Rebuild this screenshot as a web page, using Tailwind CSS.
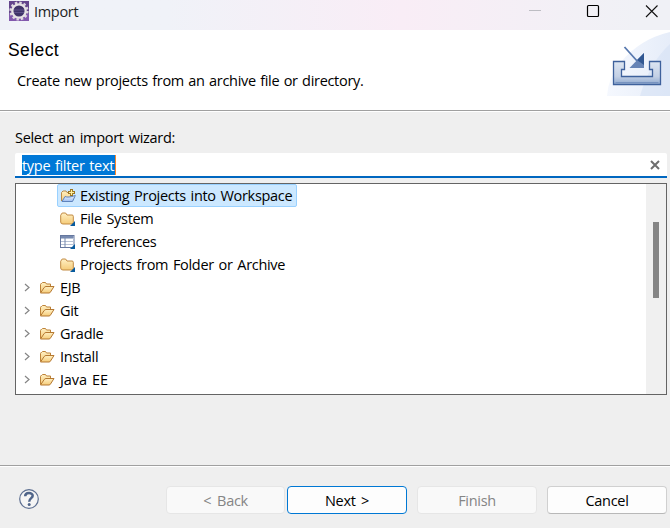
<!DOCTYPE html>
<html lang="en">
<head>
<meta charset="utf-8">
<title>Import</title>
<script src="https://cdn.jsdelivr.net/npm/@tailwindcss/browser@4"></script>
</head>
<body class="w-[670px] h-[528px] overflow-hidden bg-[#efefef] font-['Open_Sans','Noto_Sans',sans-serif] text-[14.5px] leading-[23px] tracking-[-0.3px] [word-spacing:1.2px] text-black whitespace-nowrap">
<svg class="absolute h-0 w-0">
  <defs>
    <linearGradient id="gold" x1="0" y1="0" x2="0" y2="1"><stop offset="0" stop-color="#fff0c4"/><stop offset="1" stop-color="#f5cb78"/></linearGradient>
    <linearGradient id="tray" x1="0" y1="0" x2="0" y2="1"><stop offset="0" stop-color="#dde6f2"/><stop offset=".65" stop-color="#c3d0e5"/><stop offset="1" stop-color="#8fa9cf"/></linearGradient>
    <linearGradient id="sweep" x1="0" y1="0" x2="1" y2="0"><stop offset="0" stop-color="#f5f8fe"/><stop offset="1" stop-color="#e6edf9"/></linearGradient>
    <linearGradient id="blue" x1="0" y1="0" x2="0" y2="1"><stop offset="0" stop-color="#f0f6ff"/><stop offset="1" stop-color="#9dbdf0"/></linearGradient>
    <symbol id="open" viewBox="0 0 16 14">
      <path d="M1.5 11.5V3.5Q1.5 2.5 2.5 2.5L3.5 1.5H6.5L7.5 3H11.5V5.5" fill="url(#gold)" stroke="#bd8238"/>
      <path d="M1.5 12 5.2 6.5Q6 5.5 7 5.5H15L11.5 11Q11 12 10 12Z" fill="url(#gold)" stroke="#b57831"/>
    </symbol>
    <symbol id="folder" viewBox="0 0 16 14">
      <path d="M.7 3.2 2.2 1H5.6L7 3H12Q13.3 3 13.3 4.3V10.5Q13.3 12 12 12H3Q.7 12 .7 10Z" fill="url(#gold)" stroke="#c18a42"/>
      <path d="M15 9V14H10Z" fill="#075a9d"/>
    </symbol>
  </defs>
</svg>
<div class="flex h-full flex-col">
  <div class="flex h-[30px] shrink-0 items-start bg-linear-to-r from-[#f0f2f8] from-25% via-[#f9edf6] via-60% to-[#f0f1f6] to-95% pl-[9px]">
    <svg class="mt-px h-5 w-5 shrink-0" viewBox="0 0 20 20">
      <rect width="20" height="20" fill="#64458b"/><rect y="13" width="20" height="7" fill="#8259ad"/>
      <circle cx="10" cy="10" r="8.4" fill="none" stroke="#ded9df" stroke-width="2.4" stroke-dasharray="2.4 2"/>
      <circle cx="10" cy="10" r="6.7" fill="#403468" stroke="#e8e3e5" stroke-width="2.3"/>
      <path d="M5 9H15M5 11.5H15" stroke="#7367a0" stroke-width=".6"/>
    </svg>
    <span class="ml-[5px] text-[#222]">Import</span>
    <svg class="ml-auto mr-[11px] h-6 w-[130px] shrink-0" viewBox="529 0 130 24" fill="none">
      <path d="M529 10.5H541" stroke="#bdbdc3"/>
      <rect x="587.5" y="5.5" width="11" height="11" rx="1" stroke="#000" stroke-width="1.2"/>
      <path d="M646 5.5 657.5 17M657.5 5.5 646 17" stroke="#111" stroke-width="1.1"/>
    </svg>
  </div>
  <div class="flex h-[81px] shrink-0 justify-between border-b border-[#a0a0a0] bg-white">
    <div class="pl-2 pt-[9px]">
      <div class="font-['Liberation_Sans',Arial,sans-serif] text-[17.5px] tracking-[0.4px]">Select</div>
      <div class="ml-[9px] mt-[7px] [word-spacing:0.9px]">Create new projects from an archive file or directory.</div>
    </div>
    <svg class="mt-px h-[66px] w-[64px]" viewBox="606 31 64 66">
      <path d="M607 96Q608 78 621 62 640 39 670 32V96Z" fill="url(#sweep)"/>
      <path d="M640 96Q650 62 670 44V96Z" fill="#d3e0f4" opacity=".55"/>
      <path d="M613.5 61.5H624.5V69.5H621.5V76.5H652.5V69.5H649.5V61.5H660.5V84.5H613.5Z" fill="url(#tray)" stroke="#3e619c" stroke-width="1.3"/>
      <path d="M615.5 82.5H658.5" stroke="#7793c0"/>
      <path d="M624.5 47 638 62" stroke="#5778ae" stroke-width="1.8"/>
      <path d="M644 53V68H629.5Z" fill="#6684b6"/><path d="M644 53V65L637 60Z" fill="#315792"/>
    </svg>
  </div>
  <div class="flex h-[354px] shrink-0 flex-col border-t border-white pl-[15px] pr-[3px] pt-[15px]">
    <div class="h-[26px] leading-[22px] [word-spacing:1.6px]">Select an import wizard:</div>
    <div class="flex h-[25px] shrink-0 items-center justify-between rounded-t-[2px] border-b-2 border-[#0067c0] bg-white pl-[7px] pr-[7px]">
      <span class="h-5 w-[94px] border-r border-[#ff8728] bg-[#0078d7] leading-[21px] text-white">type filter text</span>
      <svg class="h-[10px] w-[10px]" viewBox="0 0 10 10"><path d="M1 1 9 9M9 1 1 9" stroke="#6e6e6e" stroke-width="2"/></svg>
    </div>
    <div class="mt-[5px] flex h-[212px] shrink-0 border border-[#646464] bg-white">
      <div class="flex-1">
        <div class="ml-[41px] flex h-[23px] w-[240px] items-center rounded-[2px] border border-[#99d1ff] bg-[#cce8ff]">
          <svg class="ml-[2px] h-[15px] w-4 shrink-0" viewBox="0 0 16 15"><path d="M1.5 13V4.5L3 3H6L7 4.5H12V8" fill="url(#gold)" stroke="#b98a48"/><path d="M2 13.5 5 8.5Q8 10 15.3 7.5L12.5 13.5Z" fill="url(#blue)" stroke="#5d83bc"/><path d="M11.5 1V8M8 4.5H15" stroke="#9b7421" stroke-width="3"/><path d="M11.5 2V7M9 4.5H14" stroke="#fff0a0" stroke-width="1.2"/></svg>
          <span class="ml-[4px]">Existing Projects into Workspace</span>
        </div>
        <div class="flex h-[23px] items-center pl-[44px]"><svg class="h-[14px] w-4"><use href="#folder"/></svg><span class="ml-1">File System</span></div>
        <div class="flex h-[23px] items-center pl-[44px]">
          <svg class="h-[14px] w-4" viewBox="0 0 16 14"><rect x=".5" y=".5" width="13.5" height="12" fill="#fff" stroke="#65779e"/><path d="M1 1H13.5V3H1Z" fill="#778ab0"/><path d="M1 3.5H14M1 6.5H14M1 9.5H14" stroke="#b6c1d5"/><path d="M5 3V12" stroke="#7789ad"/><path d="M15 9V14H10Z" fill="#075a9d"/></svg>
          <span class="ml-1 tracking-[-0.4px]">Preferences</span></div>
        <div class="flex h-[23px] items-center pl-[44px]"><svg class="h-[14px] w-4"><use href="#folder"/></svg><span class="ml-1">Projects from Folder or Archive</span></div>
        <div class="flex h-[23px] items-center pl-[8px]"><svg class="h-[9px] w-[6px]" viewBox="0 0 6 9" fill="none"><path d="M1 1 5 4.5 1 8" stroke="#858585" stroke-width="1.2"/></svg><svg class="ml-[9px] h-[14px] w-4"><use href="#open"/></svg><span class="ml-[5px]">EJB</span></div>
        <div class="flex h-[23px] items-center pl-[8px]"><svg class="h-[9px] w-[6px]" viewBox="0 0 6 9" fill="none"><path d="M1 1 5 4.5 1 8" stroke="#858585" stroke-width="1.2"/></svg><svg class="ml-[9px] h-[14px] w-4"><use href="#open"/></svg><span class="ml-[5px]">Git</span></div>
        <div class="flex h-[23px] items-center pl-[8px]"><svg class="h-[9px] w-[6px]" viewBox="0 0 6 9" fill="none"><path d="M1 1 5 4.5 1 8" stroke="#858585" stroke-width="1.2"/></svg><svg class="ml-[9px] h-[14px] w-4"><use href="#open"/></svg><span class="ml-[5px]">Gradle</span></div>
        <div class="flex h-[23px] items-center pl-[8px]"><svg class="h-[9px] w-[6px]" viewBox="0 0 6 9" fill="none"><path d="M1 1 5 4.5 1 8" stroke="#858585" stroke-width="1.2"/></svg><svg class="ml-[9px] h-[14px] w-4"><use href="#open"/></svg><span class="ml-[5px]">Install</span></div>
        <div class="flex h-[23px] items-center pl-[8px]"><svg class="h-[9px] w-[6px]" viewBox="0 0 6 9" fill="none"><path d="M1 1 5 4.5 1 8" stroke="#858585" stroke-width="1.2"/></svg><svg class="ml-[9px] h-[14px] w-4"><use href="#open"/></svg><span class="ml-[5px] tracking-[-0.05px]">Java EE</span></div>
      </div>
      <div class="w-5 bg-[#f0f0f0] pl-[7px] pt-[38px]"><div class="h-[76px] w-[6px] bg-[#858585]"></div></div>
    </div>
  </div>
  <div class="flex flex-1 items-start border-t border-[#a0a0a0] pl-[19px] pr-[3px] pt-5 shadow-[inset_0_1px_0_white]">
    <svg class="mt-[3px] h-5 w-5" viewBox="0 0 20 20" fill="none"><circle cx="10" cy="10" r="9.3" fill="#f5f5f5" stroke="#5d6f91" stroke-width="1.2"/><path d="M6.2 7.2C6.2 3 13.7 3 13.7 6.8 13.7 9.2 10.2 9.2 10.2 12.7" stroke="#50658a" stroke-width="2.5"/><circle cx="10.2" cy="15.5" r="1.5" fill="#50658a"/></svg>
    <button class="ml-[127px] h-7 w-[119px] rounded-[4px] border border-[#e6e6e6] bg-[#f9f9f9] text-[#858585] [word-spacing:2.5px]">&lt; Back</button>
    <button class="ml-[2px] h-7 w-[120px] rounded-[4px] border border-[#0078d4] bg-[#fdfdfd] [word-spacing:2px]">Next &gt;</button>
    <button class="ml-[10px] h-7 w-[120px] rounded-[4px] border border-[#e6e6e6] bg-[#f9f9f9] text-[#858585]">Finish</button>
    <button class="ml-[10px] h-7 w-[120px] rounded-[4px] border border-[#d0d0d0] border-b-[#b8b8b8] bg-[#fdfdfd]">Cancel</button>
  </div>
</div>
</body>
</html>
